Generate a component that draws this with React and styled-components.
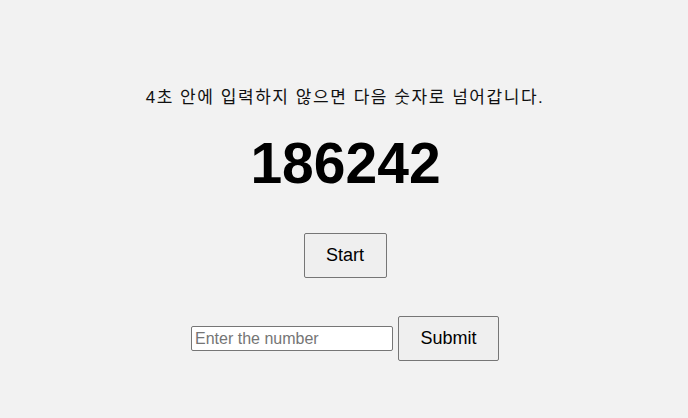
import React, { useState } from 'react';
import styled, { createGlobalStyle } from 'styled-components';

const GlobalStyle = createGlobalStyle`
  html, body {
    margin: 0;
    padding: 0;
    background: #f2f2f2;
  }
  body {
    font-family: "Liberation Sans", "Noto Sans CJK KR", Arial, sans-serif;
    color: #000;
  }
`;

export default function App() {
    const [value, setValue] = useState('');

    return (
        <>
            <GlobalStyle/>
            <Page>
                <Notice>4초 안에 입력하지 않으면 다음 숫자로 넘어갑니다.</Notice>
                <Number>186242</Number>
                <StartButton>Start</StartButton>
                <InputRow>
                    <NumberInput
                        placeholder="Enter the number"
                        value={value}
                        onChange={(e) => setValue(e.target.value)}/>
                    <SubmitButton>Submit</SubmitButton>
                </InputRow>
            </Page>
        </>
    );
}

const Page = styled.div`
  width: 688px;
  height: 418px;
  display: flex;
  flex-direction: column;
  align-items: center;
  padding-top: 86px;
  box-sizing: border-box;
`;

const Notice = styled.p`
  margin: 0 0 0 2px;
  font-size: 17px;
  line-height: 24px;
  letter-spacing: 1.55px;
  color: #111;
  font-family: "Liberation Sans", "Noto Sans CJK KR", sans-serif;
`;

const Number = styled.h1`
  margin: 20px 0 0 3px;
  font-size: 57px;
  line-height: 66px;
  font-weight: 700;
  font-family: "Liberation Sans", Arial, sans-serif;
`;

const Button = styled.button`
  font-family: "Liberation Sans", Arial, sans-serif;
  font-size: 18px;
  color: #000;
  background: #efefef;
  border: 1px solid #767676;
  border-radius: 2px;
  height: 45px;
  padding: 0;
  cursor: pointer;
`;

const StartButton = styled(Button)`
  width: 83px;
  margin-top: 37px;
  margin-left: 2px;
`;

const InputRow = styled.div`
  display: flex;
  align-items: center;
  gap: 5px;
  margin-top: 38px;
  margin-left: 2px;
`;

const NumberInput = styled.input`
  width: 202px;
  height: 25px;
  box-sizing: border-box;
  padding: 1px 3px;
  font-family: "Liberation Sans", Arial, sans-serif;
  font-size: 16px;
  border: 1px solid #767676;
  border-radius: 2px;
  background: #fff;
  &::placeholder {
    color: #757575;
  }
`;

const SubmitButton = styled(Button)`
  width: 101px;
`;
